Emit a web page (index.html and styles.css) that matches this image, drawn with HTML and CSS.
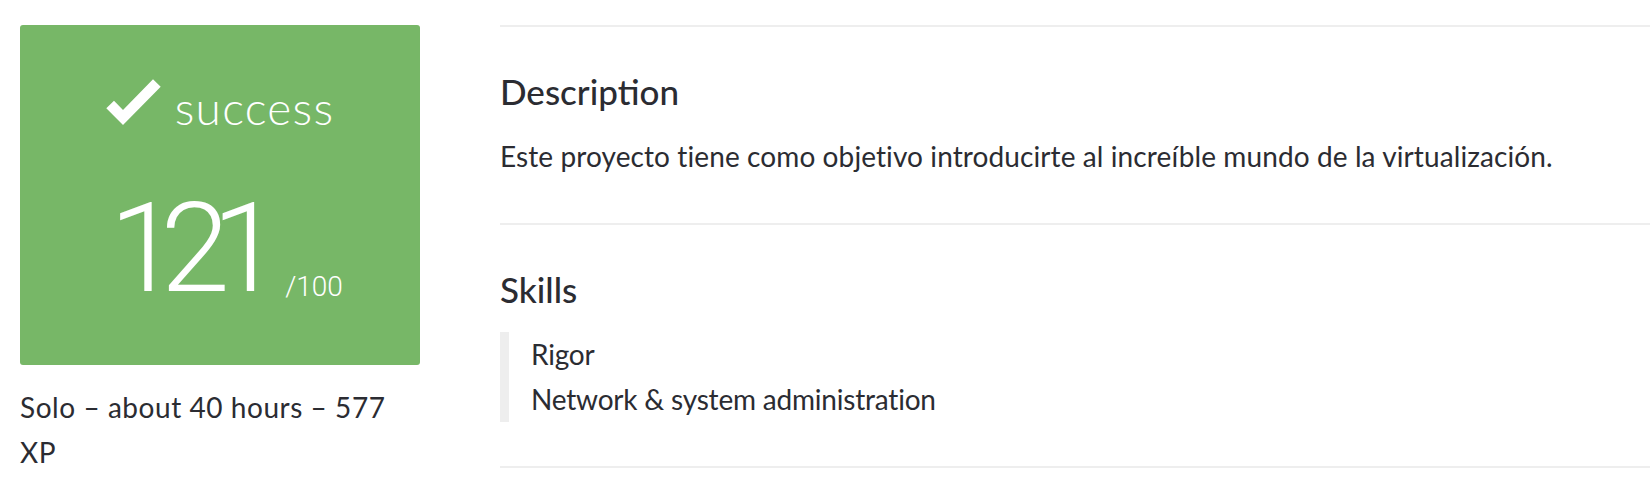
FILE: index.html
```html
<!DOCTYPE html>
<html lang="en">
<head>
<meta charset="utf-8">
<title>Project</title>
<link rel="stylesheet" href="styles.css">
</head>
<body>
<div class="page">
  <aside class="summary">
    <div class="grade">
      <div class="status">
        <svg class="check" viewBox="0 0 55 46" width="55" height="46" aria-hidden="true"><polygon points="8,21.7 17,31 47,0.3 54.7,7.7 17,46 0.3,29.3" fill="#fff"/></svg>
        <span class="status-label">success</span>
      </div>
      <div class="score"><span class="mark">121</span><span class="max">/100</span></div>
    </div>
    <p class="meta">Solo – about 40 hours – 577 XP</p>
  </aside>
  <main class="details">
    <section class="block">
      <h2>Description</h2>
      <p>Este proyecto tiene como objetivo introducirte al increíble mundo de la virtualización.</p>
    </section>
    <section class="block">
      <h2>Skills</h2>
      <ul class="skills">
        <li>Rigor</li>
        <li>Network &amp; system administration</li>
      </ul>
    </section>
  </main>
</div>
</body>
</html>
```

FILE: styles.css
```css
* { box-sizing: border-box; }

body {
  margin: 0;
  background: #fff;
  color: #2b2c32;
  font-family: "Lato", "Noto Sans", sans-serif;
}

.page {
  display: flex;
  align-items: flex-start;
  padding: 25px 0 0 20px;
}

.summary {
  flex: none;
  width: 400px;
}

.grade {
  height: 340px;
  background: #77b767;
  border-radius: 3px;
  color: #fff;
  padding-top: 54px;
  text-align: center;
}

.status {
  display: flex;
  align-items: baseline;
  justify-content: center;
  gap: 14px;
  font-size: 46px;
  font-weight: 300;
  line-height: 50px;
  letter-spacing: 1.3px;
}

.check {
  display: block;
  margin-bottom: 6px;
}

.score {
  margin-top: 53px;
  padding-left: 12px;
  font-family: "Roboto", "Lato", sans-serif;
  font-weight: 300;
  line-height: 1;
  white-space: nowrap;
}

.mark {
  font-size: 125px;
  letter-spacing: -18px;
}

.max {
  font-size: 28px;
  margin-left: 22px;
  vertical-align: -5px;
}

.meta {
  margin: 20px 0 0;
  padding-right: 14px;
  font-size: 28px;
  line-height: 45px;
  letter-spacing: 0.55px;
}

.details {
  flex: 1;
  margin-left: 80px;
}

.block {
  border-top: 2px solid #eeeeee;
  padding: 44px 0;
}

.block:last-child {
  border-bottom: 2px solid #eeeeee;
}

.block h2 {
  margin: 0 0 23px;
  font-size: 35px;
  font-weight: 500;
  line-height: 40px;
}

.block p {
  margin: 0;
  font-size: 28px;
  line-height: 45px;
  letter-spacing: 0.1px;
}

.skills {
  list-style: none;
  margin: 0;
  padding: 0 0 0 22px;
  border-left: 9px solid #eeeeee;
  font-size: 28px;
  line-height: 45px;
  letter-spacing: -0.2px;
}
```
